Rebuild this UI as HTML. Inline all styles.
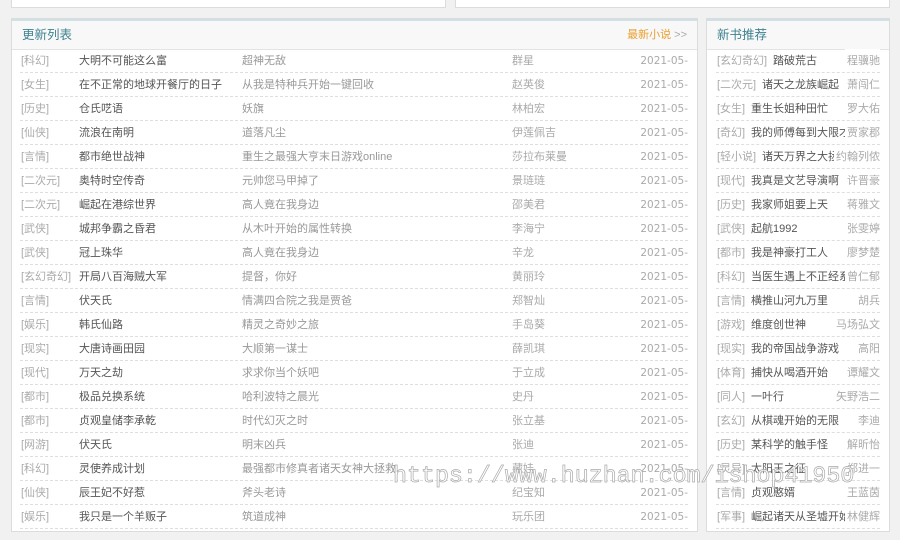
<!DOCTYPE html>
<html><head><meta charset="utf-8"><style>
*{margin:0;padding:0;box-sizing:border-box}
body{width:900px;height:540px;background:#f1f1f1;font-family:"Liberation Sans","Noto Sans CJK SC",sans-serif;font-size:11px;position:relative;overflow:hidden}
.box{position:absolute;background:#fff;border:1px solid #dcdcdc}
.hd{height:31px;background:#f8f8f8;border-top:2px solid #cfe1e5;border-bottom:1px solid #e3e3e3;color:#3f8290;font-size:12.5px;line-height:28px;padding-left:10px;position:relative}
.row{position:absolute;height:24px;line-height:24px;border-bottom:1px dashed #dedede;white-space:nowrap}
.row span{position:absolute;top:0;height:23px}
.c{color:#aaa}.t{color:#555}.ch{color:#999}.a{color:#aaa}.d{color:#aaa;font-family:"DejaVu Sans",sans-serif;font-size:10.5px}
.wm{position:absolute;left:393px;top:463px;font-family:"Liberation Mono",monospace;font-size:23.3px;color:rgba(255,255,255,.85);-webkit-text-stroke:0.7px #aaa;white-space:nowrap}
</style></head><body>
<div class="box" style="left:11px;top:-2px;width:435px;height:10px"></div>
<div class="box" style="left:455px;top:-2px;width:435px;height:10px"></div>

<div class="box" style="left:11px;top:18px;width:687px;height:514px">
<div class="hd">更新列表<span style="position:absolute;right:10px;top:0;color:#e8a030;font-size:11px">最新小说 <span style="color:#aaa">&gt;&gt;</span></span></div>
</div>
<div class="box" style="left:706px;top:18px;width:184px;height:514px">
<div class="hd">新书推荐</div>
</div>

<div id="L"></div><div id="R"></div>
<div class="wm">https://www.huzhan.com/ishop41950</div>
<script>
var L=[["科幻","大明不可能这么富","超神无敌","群星"],["女生","在不正常的地球开餐厅的日子","从我是特种兵开始一键回收","赵英俊"],["历史","仓氏呓语","妖旗","林柏宏"],["仙侠","流浪在南明","道落凡尘","伊莲佩吉"],["言情","都市绝世战神","重生之最强大亨末日游戏online","莎拉布莱曼"],["二次元","奥特时空传奇","元帅您马甲掉了","景琏琏"],["二次元","崛起在港综世界","高人竟在我身边","邵美君"],["武侠","城邦争霸之昏君","从木叶开始的属性转换","李海宁"],["武侠","冠上珠华","高人竟在我身边","辛龙"],["玄幻奇幻","开局八百海贼大军","提督，你好","黄丽玲"],["言情","伏天氏","情满四合院之我是贾爸","郑智灿"],["娱乐","韩氏仙路","精灵之奇妙之旅","手岛葵"],["现实","大唐诗画田园","大顺第一谋士","薛凯琪"],["现代","万天之劫","求求你当个妖吧","于立成"],["都市","极品兑换系统","哈利波特之晨光","史丹"],["都市","贞观皇储李承乾","时代幻灭之时","张立基"],["网游","伏天氏","明末凶兵","张迪"],["科幻","灵使养成计划","最强都市修真者诸天女神大拯救","藏娃"],["仙侠","辰王妃不好惹","斧头老诗","纪宝知"],["娱乐","我只是一个羊贩子","筑道成神","玩乐团"]];
var R=[["玄幻奇幻","踏破荒古","程骥驰"],["二次元","诸天之龙族崛起","萧闯仁"],["女生","重生长姐种田忙","罗大佑"],["奇幻","我的师傅每到大限才","贾家郡"],["轻小说","诸天万界之大拯","约翰列侬"],["现代","我真是文艺导演啊","许晋豪"],["历史","我家师姐要上天","蒋雅文"],["武侠","起航1992","张雯婷"],["都市","我是神豪打工人","廖梦楚"],["科幻","当医生遇上不正经系","曾仁郁"],["言情","横推山河九万里","胡兵"],["游戏","维度创世神","马场弘文"],["现实","我的帝国战争游戏","高阳"],["体育","捕快从喝酒开始","谭耀文"],["同人","一叶行","矢野浩二"],["玄幻","从棋魂开始的无限","李迪"],["历史","某科学的触手怪","解昕怡"],["灵异","太阳王之征","郑进一"],["言情","贞观憨婿","王蓝茵"],["军事","崛起诸天从圣墟开始","林健辉"]];
var h="";
L.forEach(function(r,i){var y=49+i*24;h+='<div class="row" style="left:20px;top:'+y+'px;width:668px"><span class="c" style="left:1px">['+r[0]+']</span><span class="t" style="left:59px">'+r[1]+'</span><span class="ch" style="left:222px">'+r[2]+'</span><span class="a" style="left:492px">'+r[3]+'</span><span class="d" style="right:0">2021-05-</span></div>';});
R.forEach(function(r,i){var y=49+i*24;h+='<div class="row" style="left:716px;top:'+y+'px;width:164px"><span class="c" style="left:1px">['+r[0]+']</span><span class="t" style="left:'+(r[0].length*11+13)+'px">'+r[1]+'</span><span class="a" style="right:0;background:#fff;padding-left:2px">'+r[2]+'</span></div>';});
document.getElementById("L").innerHTML=h;
</script>
</body></html>
